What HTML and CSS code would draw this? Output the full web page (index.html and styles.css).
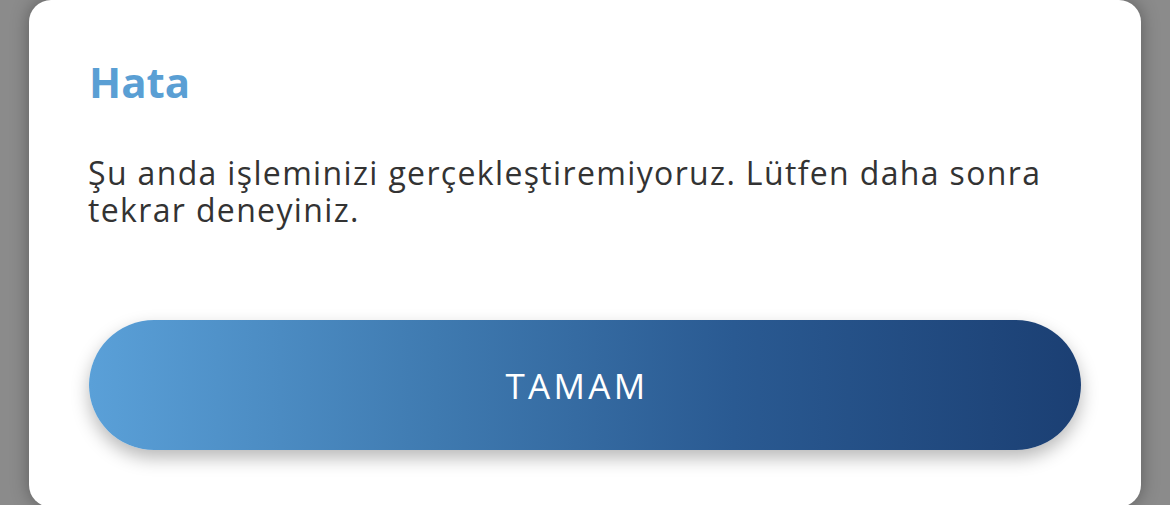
FILE: index.html
```html
<!DOCTYPE html>
<html lang="tr">
<head>
<meta charset="utf-8">
<title>Hata</title>
<link rel="stylesheet" href="styles.css">
</head>
<body>
<div class="overlay">
  <div class="dialog">
    <h1 class="dialog-title">Hata</h1>
    <p class="dialog-message">Şu anda işleminizi gerçekleştiremiyoruz. Lütfen daha sonra tekrar deneyiniz.</p>
    <button class="dialog-button" type="button">TAMAM</button>
  </div>
</div>
</body>
</html>
```
FILE: styles.css
```css
html, body {
  margin: 0;
  padding: 0;
  background: #8b8b8b;
  height: 100%;
  overflow: hidden;
}
.overlay {
  display: flex;
  padding-left: 29px;
}
.dialog {
  width: 1112px;
  height: 507px;
  box-sizing: border-box;
  background: #ffffff;
  border-radius: 22px;
  box-shadow: 0 0 18px rgba(0, 0, 0, 0.35);
  padding: 56px 60px 0 60px;
  display: flex;
  flex-direction: column;
  font-family: "Open Sans", "Noto Sans", sans-serif;
}
.dialog-title {
  margin: 0;
  font-size: 42px;
  line-height: 52px;
  font-weight: 700;
  color: #5a9fd4;
}
.dialog-message {
  margin: 46px 0 0 -1px;
  font-size: 32px;
  line-height: 37px;
  letter-spacing: 1.35px;
  color: #333333;
}
.dialog-button {
  margin: 92px 0 0 0;
  width: 992px;
  height: 130px;
  border: none;
  border-radius: 65px;
  background: linear-gradient(90deg, #5aa0d8 0%, #3f7ab0 35%, #2a5a92 65%, #1b3f73 100%);
  box-shadow: 0 8px 18px rgba(0, 0, 0, 0.28);
  color: #ffffff;
  font-family: "Open Sans", "Noto Sans", sans-serif;
  font-size: 35px;
  letter-spacing: 3.3px;
  font-weight: 400;
  padding: 0 16px 0 0;
}
```
